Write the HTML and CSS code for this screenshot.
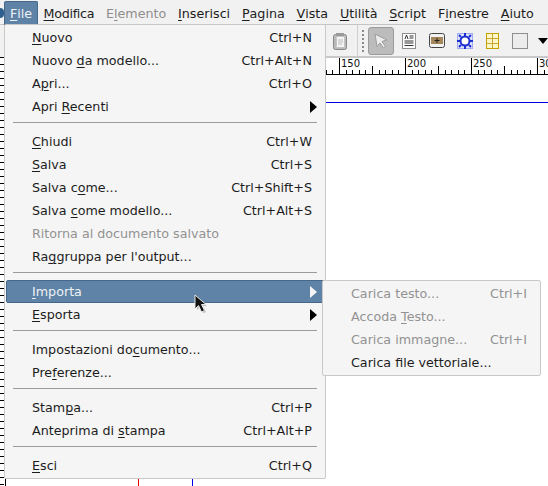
FILE: index.html
```html
<!DOCTYPE html>
<html lang="it">
<head>
<meta charset="utf-8">
<title>Scribus</title>
<link rel="stylesheet" href="styles.css">
</head>
<body>
<div class="app">
  <nav class="menubar">
    <span class="logo"></span>
    <span class="mb-item mb-active"><u>F</u>ile</span>
    <span class="mb-item mb-tight"><u>M</u>odifica</span>
    <span class="mb-item mb-off">E<u>l</u>emento</span>
    <span class="mb-item"><u>I</u>nserisci</span>
    <span class="mb-item"><u>P</u>agina</span>
    <span class="mb-item"><u>V</u>ista</span>
    <span class="mb-item"><u>U</u>tilità</span>
    <span class="mb-item"><u>S</u>cript</span>
    <span class="mb-item">F<u>i</u>nestre</span>
    <span class="mb-item"><u>A</u>iuto</span>
  </nav>
  <div class="work">
    <div class="left-ruler"></div>
    <div class="main">
      <div class="toolbar">
        <svg class="ico ico-clip" width="16" height="18" viewBox="0 0 16 18"><rect x="1.5" y="2.5" width="13" height="15" rx="2" fill="#b9b9b9" stroke="#8a8a8a"/><rect x="4.5" y="4.5" width="8" height="11" fill="#f4f4f4" stroke="#c4c4c4"/><rect x="4" y="1" width="8" height="3" fill="#9a9a9a"/><path d="M6 8h5M6 10h5M6 12h4" stroke="#bdbdbd"/></svg>
        <span class="tb-sep"></span>
        <span class="grip"></span>
        <span class="tb-btn tb-on"><svg width="14" height="16" viewBox="0 0 14 16"><path d="M1 1l12 6-5 1.500 3.500 5-2 1.500-3.500-5-3 3.500z" fill="#ececec" stroke="#9c9c9c"/></svg></span>
        <svg class="ico ico-text" width="14" height="16" viewBox="0 0 14 16"><rect x=".5" y=".5" width="13" height="15" fill="#fff" stroke="#8e8e8e"/><path d="M3 6l1.500-4 1.500 4M7.500 3h4M7.500 5h4M2.500 8h9M2.500 10h9M2.500 12.500h9" stroke="#333" fill="none"/></svg>
        <svg class="ico ico-img" width="16" height="15" viewBox="0 0 16 15"><rect x=".5" y=".5" width="15" height="14" rx="2" fill="#f2f2f2" stroke="#444"/><rect x="2" y="4" width="12" height="7" fill="#a4875a"/><path d="M8 5v5M5.500 7.500h5" stroke="#222"/></svg>
        <svg class="ico ico-shape" width="16" height="16" viewBox="0 0 16 16"><rect x=".5" y=".5" width="15" height="15" fill="#dfe3fb" stroke="#5a6be0" stroke-dasharray="1 1"/><circle cx="8" cy="8" r="4.500" fill="#fff" stroke="#1b2fd0" stroke-width="2"/><path d="M8 0v3M8 13v3M0 8h3M13 8h3M2 2l2 2M14 2l-2 2M2 14l2-2M14 14l-2-2" stroke="#1b2fd0" stroke-width="2"/></svg>
        <svg class="ico ico-table" width="13" height="16" viewBox="0 0 13 16"><rect x=".5" y=".5" width="12" height="15" fill="#fdf6c8" stroke="#c3a100"/><path d="M6.500 1v14M1 5.500h11M1 10.500h11" stroke="#c9a72c"/></svg>
        <svg class="ico ico-box" width="16" height="16" viewBox="0 0 16 16"><rect x=".5" y=".5" width="15" height="15" fill="#ececec" stroke="#8e8e8e"/></svg>
        <span class="tb-more"></span>
      </div>
      <div class="top-ruler">
        <svg class="ruler-svg" width="222" height="17" viewBox="326 58 222 17" shape-rendering="crispEdges">
          <path stroke="#000" fill="none" d="M326 74h222M326 70v4M332 70v4M339 58v16M346 70v4M352 70v4M359 70v4M365 70v4M372 66v8M379 70v4M385 70v4M392 70v4M398 70v4M405 58v16M412 70v4M418 70v4M425 70v4M431 70v4M438 66v8M445 70v4M451 70v4M458 70v4M464 70v4M471 58v16M478 70v4M484 70v4M491 70v4M497 70v4M504 66v8M511 70v4M517 70v4M524 70v4M530 70v4M537 58v16M544 70v4"/>
        </svg>
        <span class="rl rl-1">150</span>
        <span class="rl rl-2">200</span>
        <span class="rl rl-3">250</span>
        <span class="rl rl-4">300</span>
      </div>
      <div class="canvas"><div class="guide-blue"></div></div>
    </div>
    <span class="guide-v guide-red"></span>
    <span class="guide-v guide-bl"></span>
    <span class="guide-v guide-edge"></span>
  </div>

  <div class="menu menu-file">
    <div class="row"><span><u>N</u>uovo</span><span>Ctrl+N</span></div>
    <div class="row"><span>Nuovo <u>d</u>a modello...</span><span>Ctrl+Alt+N</span></div>
    <div class="row"><span>A<u>p</u>ri...</span><span>Ctrl+O</span></div>
    <div class="row"><span>Apri <u>R</u>ecenti</span><i class="arrow"></i></div>
    <div class="sep"></div>
    <div class="row"><span><u>C</u>hiudi</span><span>Ctrl+W</span></div>
    <div class="row"><span><u>S</u>alva</span><span>Ctrl+S</span></div>
    <div class="row"><span>Salva c<u>o</u>me...</span><span>Ctrl+Shift+S</span></div>
    <div class="row"><span>Salva <u>c</u>ome modello...</span><span>Ctrl+Alt+S</span></div>
    <div class="row off"><span>Ritorna al documento salvato</span></div>
    <div class="row"><span>Ra<u>g</u>gruppa per l'output...</span></div>
    <div class="sep"></div>
    <div class="row hot"><span><u>I</u>mporta</span><i class="arrow"></i></div>
    <div class="row"><span><u>E</u>sporta</span><i class="arrow"></i></div>
    <div class="sep"></div>
    <div class="row"><span>Impostazioni do<u>c</u>umento...</span></div>
    <div class="row"><span>Pre<u>f</u>erenze...</span></div>
    <div class="sep"></div>
    <div class="row"><span>Stam<u>p</u>a...</span><span>Ctrl+P</span></div>
    <div class="row"><span>Anteprima di <u>s</u>tampa</span><span>Ctrl+Alt+P</span></div>
    <div class="sep"></div>
    <div class="row"><span><u>E</u>sci</span><span>Ctrl+Q</span></div>
  </div>

  <div class="menu menu-sub">
    <div class="row off"><span>Carica testo...</span><span>Ctrl+I</span></div>
    <div class="row off"><span>Accoda <u>T</u>esto...</span></div>
    <div class="row off"><span>Carica immagne...</span><span>Ctrl+I</span></div>
    <div class="row"><span>Carica file vettoriale...</span></div>
  </div>

  <svg class="cursor" width="14" height="21" viewBox="0 0 14 21"><path d="M3 3v13l3-3 3 6 3-1-3-6h4z" fill="#9a9a9a" opacity=".6"/><path d="M1 1v14l3.500-3.500 3 6.500 3-1.500-3-6h4.500z" fill="#111" stroke="#e8e8e8" stroke-width="1"/></svg>
</div>
</body>
</html>
```
FILE: styles.css
```css
* { box-sizing: border-box; }
html, body { margin: 0; padding: 0; }
body { width: 548px; height: 486px; overflow: hidden; background: #fff; font-family: "DejaVu Sans", sans-serif; font-size: 12.700px; color: #1c1c1c; }
u { text-underline-offset: 2px; text-decoration-thickness: 1px; }
.app { position: relative; width: 548px; height: 486px; display: flex; flex-direction: column; }

.menubar { height: 25px; display: flex; align-items: stretch; padding-top: 1px; background: #f1f1f1; border-bottom: 1px solid #c4c4c4; }
.logo { width: 4px; height: 10px; margin-top: 7px; border-radius: 0 5px 5px 0; background: #2f5f8f; }
.mb-item { display: flex; align-items: center; padding: 0 5.900px; height: 24px; }
.mb-active { background: #5f83a6; color: #eef2f6; border: 1px solid #44688c; border-bottom: 0; border-radius: 2px 2px 0 0; padding: 0 5px; }
.mb-tight { letter-spacing: -0.300px; margin-left: -0.500px; }
.mb-off { color: #8e8e8e; }

.work { position: relative; flex: 1; display: flex; min-height: 0; }
.left-ruler { width: 326px; background-color: #fff; border-top: 32px solid #f1f1f1; background-image: repeating-linear-gradient(to bottom, #000 0, #000 1px, transparent 1px, transparent 7px); background-size: 4px 100%; background-repeat: no-repeat; }
.main { flex: 1; display: flex; flex-direction: column; min-width: 0; }
.toolbar { height: 33px; display: flex; align-items: center; background: #f1f1f1; border-bottom: 2px solid #c8c8c8; position: relative; }
.ico { flex: none; display: block; }
.ico-clip { margin-left: 6px; }
.tb-sep { width: 1px; align-self: stretch; background: #d0d0d0; margin-left: 9px; }
.grip { width: 4px; height: 24px; margin-left: 3px; background-image: radial-gradient(circle, #8a8a8a 1px, transparent 1.200px); background-size: 4px 4px; }
.tb-btn { width: 28px; height: 28px; display: flex; align-items: center; justify-content: center; margin-left: 3px; }
.tb-on { background: #bcbcbc; border: 1px solid #9a9a9a; border-radius: 3px; }
.ico-text { margin-left: 8px; }
.ico-img { margin-left: 13px; }
.ico-shape { margin-left: 12px; }
.ico-table { margin-left: 13px; }
.ico-box { margin-left: 13px; }
.tb-more { margin-left: 10px; width: 0; height: 0; border-left: 5px solid transparent; border-right: 5px solid transparent; border-top: 6px solid #000; }

.top-ruler { position: relative; height: 17px; background: #fff; font-size: 10px; line-height: 10px; color: #111; }
.ruler-svg { display: block; }
.rl { position: absolute; top: 1px; }
.rl-1 { left: 15px; }
.rl-2 { left: 81px; }
.rl-3 { left: 147px; }
.rl-4 { left: 213px; }
.canvas { flex: 1; background: #fff; position: relative; }
.guide-blue { height: 1px; margin-top: 27px; background: #0000e6; }
.guide-v { position: absolute; bottom: 0; width: 1px; height: 8px; }
.guide-red { left: 138px; background: #e60000; }
.guide-bl { left: 192px; background: #0000e6; }
.guide-edge { left: 5px; background: #000; }

.menu { position: absolute; background: #f5f5f5; border: 1px solid #c9c9c9; border-radius: 2px; }
.menu-file { left: 4px; top: 24px; width: 322px; height: 455px; padding: 1px 1px; }
.menu-sub { left: 322px; top: 280px; width: 219px; height: 96px; padding: 1px 1px; }
.row { height: 23px; display: flex; align-items: center; justify-content: space-between; padding: 0 12px 0 26px; position: relative; }
.menu-sub .row { padding-left: 27px; }
.off { color: #929292; }
.hot { background: #5f83a6; color: #eef2f6; border: 1px solid #44688c; border-radius: 2px; padding: 0 11px 0 25px; }
.sep { height: 12px; padding-top: 4px; }
.sep::before { content: ""; display: block; height: 1px; margin: 0 7px; background: #9a9a9a; }
.arrow { width: 0; height: 0; border-top: 6px solid transparent; border-bottom: 6px solid transparent; border-left: 7px solid #000; margin-right: -5px; }
.hot .arrow { border-left-color: #f5f5f5; }
.cursor { position: absolute; left: 194px; top: 294px; }
```
